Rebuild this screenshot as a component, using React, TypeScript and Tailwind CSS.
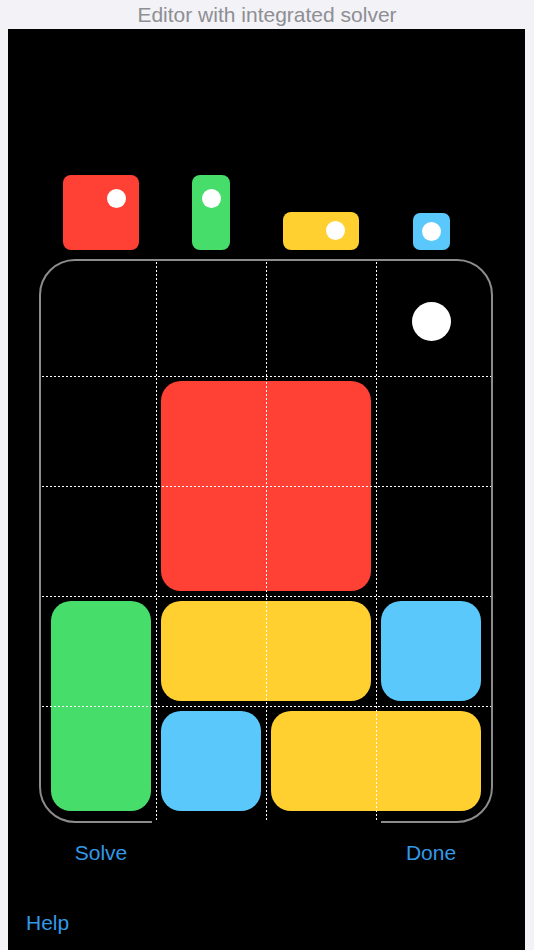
import React from "react";

const RED = "bg-[#ff4035]";
const GREEN = "bg-[#47dd6b]";
const YELLOW = "bg-[#ffd030]";
const BLUE = "bg-[#5ac8fa]";

function Dot({ className }: { className: string }) {
  return <span className={`absolute h-[19px] w-[19px] rounded-full bg-white ${className}`} />;
}

function Palette() {
  return (
    <div className="ml-[7px] grid h-[75px] grid-cols-[repeat(4,110px)]">
      <div className="flex items-end justify-center">
        <div className={`relative h-[75px] w-[76px] rounded-[8px] ${RED}`}>
          <Dot className="left-[44px] top-[14px]" />
        </div>
      </div>
      <div className="flex items-end justify-center">
        <div className={`relative h-[75px] w-[38px] rounded-[8px] ${GREEN}`}>
          <Dot className="left-[10px] top-[14px]" />
        </div>
      </div>
      <div className="flex items-end justify-center">
        <div className={`relative h-[38px] w-[76px] rounded-[8px] ${YELLOW}`}>
          <Dot className="left-[43px] top-[9px]" />
        </div>
      </div>
      <div className="flex items-end justify-center">
        <div className={`relative h-[37px] w-[37px] rounded-[7px] ${BLUE}`}>
          <Dot className="left-[9px] top-[9px]" />
        </div>
      </div>
    </div>
  );
}

function GridLines() {
  const rows = [117.5, 227.5, 337.5, 447.5];
  const cols = [117.5, 227.5, 337.5];
  return (
    <svg
      className="pointer-events-none absolute left-[-2px] top-[-2px]"
      width="454"
      height="564"
      viewBox="0 0 454 564"
    >
      {rows.map((y) => (
        <line key={`h${y}`} x1="3" x2="452" y1={y} y2={y} stroke="white" strokeWidth="1" strokeDasharray="2 2" />
      ))}
      {cols.map((x) => (
        <line key={`v${x}`} x1={x} x2={x} y1="3" y2="561" stroke="white" strokeWidth="1" strokeDasharray="2 2" />
      ))}
    </svg>
  );
}

function Board() {
  return (
    <div className="relative mt-[9px] h-[564px] w-[454px] rounded-[36px] border-2 border-[#8c8c8c] p-[5px]">
      {/* exit opening at the bottom */}
      <div className="absolute bottom-[-2px] left-[111px] h-[2px] w-[229px] bg-black" />
      <div className="grid grid-cols-[repeat(4,110px)] grid-rows-[repeat(5,110px)]">
        <div className="col-start-4 row-start-1 flex items-center justify-center">
          <span className="h-[39px] w-[39px] rounded-full bg-white" />
        </div>
        <div className="col-span-2 col-start-2 row-span-2 row-start-2 p-[5px]">
          <div className={`h-full w-full rounded-[20px] ${RED}`} />
        </div>
        <div className="col-start-1 row-span-2 row-start-4 p-[5px]">
          <div className={`h-full w-full rounded-[20px] ${GREEN}`} />
        </div>
        <div className="col-span-2 col-start-2 row-start-4 p-[5px]">
          <div className={`h-full w-full rounded-[20px] ${YELLOW}`} />
        </div>
        <div className="col-start-4 row-start-4 p-[5px]">
          <div className={`h-full w-full rounded-[20px] ${BLUE}`} />
        </div>
        <div className="col-start-2 row-start-5 p-[5px]">
          <div className={`h-full w-full rounded-[20px] ${BLUE}`} />
        </div>
        <div className="col-span-2 col-start-3 row-start-5 p-[5px]">
          <div className={`h-full w-full rounded-[20px] ${YELLOW}`} />
        </div>
      </div>
      <GridLines />
    </div>
  );
}

export default function App() {
  return (
    <div className="h-[950px] w-[534px] overflow-hidden bg-[#f2f2f7] font-['Liberation_Sans',Arial,sans-serif]">
      <div className="h-[29px] text-center text-[21px] leading-[29px] text-[#8e8e93]">
        Editor with integrated solver
      </div>
      <div className="ml-2 flex h-[921px] w-[517px] flex-col bg-black pl-[31px] pt-[146px]">
        <Palette />
        <Board />
        <div className="ml-[7px] mt-[17px] grid grid-cols-[repeat(4,110px)] text-[21px] leading-[25px] text-[#3399e6]">
          <button className="col-start-1 text-center">Solve</button>
          <button className="col-start-4 text-center">Done</button>
        </div>
        <div className="-ml-[13px] mt-[45px] text-[21px] leading-[25px] text-[#3399e6]">
          <button>Help</button>
        </div>
      </div>
    </div>
  );
}
